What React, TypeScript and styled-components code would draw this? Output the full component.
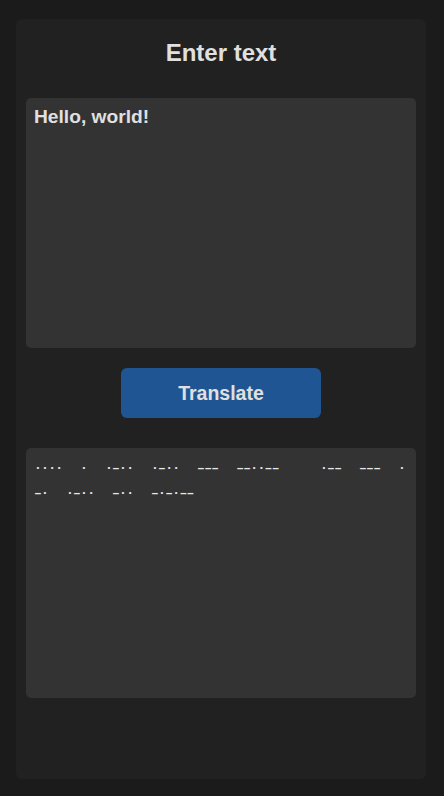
import { useEffect, useRef, useState } from 'react';
import styled, { createGlobalStyle } from 'styled-components';

const GlobalStyle = createGlobalStyle`
  html, body {
    margin: 0;
    padding: 0;
    background: #1b1b1b;
  }
  body {
    font-family: "Liberation Sans", Arial, sans-serif;
  }
`;

const Page = styled.div`
  padding: 19px 16px 17px;
`;

const Card = styled.div`
  box-sizing: border-box;
  width: 410px;
  height: 760px;
  padding: 20px 10px;
  background: #212121;
  border-radius: 6px;
  display: flex;
  flex-direction: column;
`;

const Title = styled.h2`
  margin: 0 0 31px;
  font-size: 24px;
  line-height: 28px;
  font-weight: bold;
  text-align: center;
  color: #e0e0e0;
`;

const Box = styled.div`
  box-sizing: border-box;
  height: 250px;
  padding: 8px;
  background: #333333;
  border-radius: 5px;
  color: #e6e6e6;
`;

const Input = styled.textarea`
  display: block;
  box-sizing: border-box;
  width: 100%;
  height: 250px;
  padding: 8px;
  margin: 0;
  border: none;
  outline: none;
  resize: none;
  background: #333333;
  border-radius: 5px;
  color: #e0e0e0;
  caret-color: #e0e0e0;
  font-family: "Liberation Sans", Arial, sans-serif;
  font-size: 19.2px;
  font-weight: bold;
`;

const Button = styled.button`
  align-self: center;
  width: 200px;
  height: 50px;
  margin: 20px 0 30px;
  border: none;
  border-radius: 6px;
  background: #1f5592;
  color: #e0e0e0;
  font-family: "Liberation Sans", Arial, sans-serif;
  font-size: 19.5px;
  font-weight: bold;
  cursor: pointer;
`;

const Morse = styled.div`
  font-family: "Liberation Mono", "Courier New", monospace;
  font-size: 13px;
  font-weight: bold;
  line-height: 25px;
  letter-spacing: -0.7px;
  word-spacing: 10.6px;
  white-space: pre-wrap;
  word-break: break-all;
`;

const CODE: Record<string, string> = {
  a: '.-', b: '-...', c: '-.-.', d: '-..', e: '.', f: '..-.', g: '--.', h: '....',
  i: '..', j: '.---', k: '-.-', l: '.-..', m: '--', n: '-.', o: '---', p: '.--.',
  q: '--.-', r: '.-.', s: '...', t: '-', u: '..-', v: '...-', w: '.--', x: '-..-',
  y: '-.--', z: '--..', ',': '--..--', '!': '-.-.--', '.': '.-.-.-', '?': '..--..',
};

function toMorse(text: string) {
  return text
    .toLowerCase()
    .split(' ')
    .filter(Boolean)
    .map((word) =>
      word
        .split('')
        .map((c) => CODE[c] || '')
        .filter(Boolean)
        .map((code) => code.replace(/\./g, '·').replace(/-/g, '–'))
        .join(' ')
    )
    .join('  \u2002');
}

export default function App() {
  const [text, setText] = useState('Hello, world!');
  const [output, setOutput] = useState(toMorse('Hello, world!'));
  const inputRef = useRef<HTMLTextAreaElement>(null);

  useEffect(() => {
    const el = inputRef.current;
    if (el) {
      el.focus();
      el.setSelectionRange(el.value.length, el.value.length);
    }
  }, []);

  return (
    <Page>
      <GlobalStyle />
      <Card>
        <Title>Enter text</Title>
        <Input ref={inputRef} value={text} onChange={(e) => setText(e.target.value)} />
        <Button onClick={() => setOutput(toMorse(text))}>Translate</Button>
        <Box>
          <Morse>{output}</Morse>
        </Box>
      </Card>
    </Page>
  );
}
